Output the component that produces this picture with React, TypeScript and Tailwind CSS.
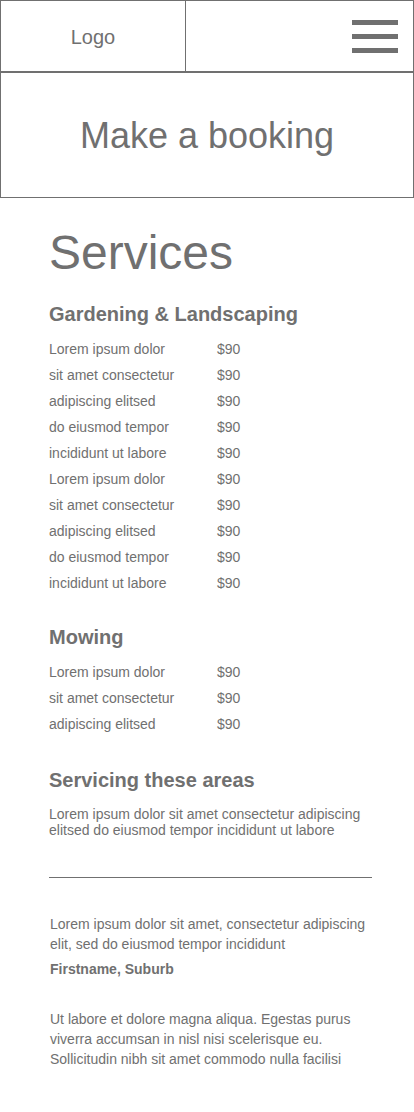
const GRAY = "text-[#707070]";

const gardening = [
  "Lorem ipsum dolor",
  "sit amet consectetur",
  "adipiscing elitsed",
  "do eiusmod tempor",
  "incididunt ut labore",
  "Lorem ipsum dolor",
  "sit amet consectetur",
  "adipiscing elitsed",
  "do eiusmod tempor",
  "incididunt ut labore",
];

const mowing = ["Lorem ipsum dolor", "sit amet consectetur", "adipiscing elitsed"];

// one line of the price list: name on the left, price in a fixed column
const PriceRow = ({ name, price }: { name: string; price: string }) => (
  <li className="flex h-[26px] items-center text-[14px] leading-[26px]">
    <span className="w-[168px] shrink-0">{name}</span>
    <span>{price}</span>
  </li>
);

const SectionHeading = ({ children, className = "" }: { children: React.ReactNode; className?: string }) => (
  <h2 className={`text-[20px] font-bold leading-[20px] ${className}`}>{children}</h2>
);

export default function App() {
  return (
    <div className={`min-h-[1112px] w-[414px] bg-white font-['Liberation_Sans',Arial,sans-serif] ${GRAY}`}>
      {/* top bar */}
      <header className="flex h-[72px] border border-[#707070]">
        <div className="flex w-[185px] shrink-0 items-center justify-center border-r border-[#707070] pt-[2px] text-[20px] leading-[20px]">
          Logo
        </div>
        <div className="flex flex-1 items-center justify-end pr-[15px]">
          <button aria-label="Menu" className="flex w-[46px] flex-col gap-[9px]">
            <span className="block h-[5px] w-full bg-[#707070]" />
            <span className="block h-[5px] w-full bg-[#707070]" />
            <span className="block h-[5px] w-full bg-[#707070]" />
          </button>
        </div>
      </header>

      <section className="flex h-[126px] items-center justify-center border border-[#707070] pt-px">
        <h1 className="text-[36px] leading-[36px]">Make a booking</h1>
      </section>

      <main className="pl-[49px] pr-[42px] pt-[31px] pb-10">
        <h1 className="text-[48px] leading-[48px]">Services</h1>

        <SectionHeading className="mt-[27px]">Gardening &amp; Landscaping</SectionHeading>
        <ul className="mt-[12px]">
          {gardening.map((name, i) => (
            <PriceRow key={i} name={name} price="$90" />
          ))}
        </ul>

        <SectionHeading className="mt-[31px]">Mowing</SectionHeading>
        <ul className="mt-[12px]">
          {mowing.map((name, i) => (
            <PriceRow key={i} name={name} price="$90" />
          ))}
        </ul>

        <SectionHeading className="mt-[33px]">Servicing these areas</SectionHeading>
        <p className="mt-[16px] text-[14px] leading-[16px]">
          Lorem ipsum dolor sit amet consectetur adipiscing elitsed do eiusmod tempor incididunt ut labore
        </p>

        <hr className="mt-[39px] border-0 border-t border-[#707070]" />

        <div className="-mr-[8px] mt-[36px] pl-px text-[14px] leading-[20px]">
          <p>Lorem ipsum dolor sit amet, consectetur adipiscing elit, sed do eiusmod tempor incididunt</p>
          <p className="mt-[5px] font-bold">Firstname, Suburb</p>
          <p className="mt-[30px]">
            Ut labore et dolore magna aliqua. Egestas purus viverra accumsan in nisl nisi scelerisque eu. Sollicitudin
            nibh sit amet commodo nulla facilisi
          </p>
        </div>
      </main>
    </div>
  );
}
